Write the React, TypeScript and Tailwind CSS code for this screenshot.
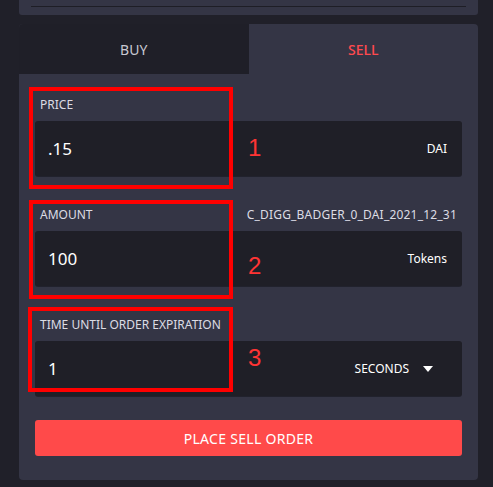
const FIELDS = [
  { label: 'PRICE', value: '.15', unit: 'DAI' },
  { label: 'AMOUNT', value: '100', unit: 'Tokens', extra: 'C_DIGG_BADGER_0_DAI_2021_12_31' },
  { label: 'TIME UNTIL ORDER EXPIRATION', value: '1', unit: 'SECONDS', select: true },
]

function Field({ label, value, unit, extra, select }: { label: string; value: string; unit: string; extra?: string; select?: boolean }) {
  return (
    <div className="flex flex-col gap-2">
      <div className="flex h-4 items-center justify-between pl-[5px] pr-[5px] text-[12px] text-[#dcdce4]">
        <span>{label}</span>
        {extra && <span className="tracking-[0.2px]">{extra}</span>}
      </div>
      <div className="flex h-[55px] items-center justify-between rounded-[3px] bg-[#1f1f27] pl-[13px] pr-[15px] shadow-[0_1px_0_rgba(0,0,0,0.35)]">
        <span className="text-[17px] text-white">{value}</span>
        {select ? (
          <span className="flex items-center gap-[14px] pr-[14px] text-[12px] text-white">
            {unit}
            <svg width="10" height="6" viewBox="0 0 10 6">
              <path d="M0 0h10L5 6z" fill="#fff" />
            </svg>
          </span>
        ) : (
          <span className="text-[12px] text-white">{unit}</span>
        )}
      </div>
    </div>
  )
}

export default function App() {
  return (
    <div className="h-screen w-[493px] overflow-hidden bg-[#202029] font-['Noto_Sans',sans-serif]">
      <div className="ml-[19px] h-[15px] w-[459px] rounded-b-[3px] bg-[#343545] px-3 pt-[6px]">
        <div className="border-t border-[#1e1e26]" />
      </div>

      <div className="ml-[19px] mt-[9px] w-[459px] overflow-hidden rounded-[4px] bg-[#343545]">
        <div className="grid h-[50px] grid-cols-2 text-[14px]">
          <div className="flex items-center justify-center bg-[#1f1f28] text-[#c8c8d2]">BUY</div>
          <div className="flex items-center justify-center font-medium text-[#ff4a4f]">SELL</div>
        </div>

        <div className="relative flex flex-col px-4 pb-6 pt-[23px]">
          <div className="flex flex-col gap-[31px]">
            {FIELDS.map((f) => (
              <Field key={f.label} {...f} />
            ))}
          </div>

          <button className="mt-6 h-9 rounded-[3px] bg-[#ff4a4a] text-[14px] tracking-[0.3px] text-white">PLACE SELL ORDER</button>

          {/* annotations */}
          <div className="absolute left-[10px] top-[13px] h-[102px] w-[204px] border-4 border-[#ff0000]" />
          <div className="absolute left-[10px] top-[126px] h-[99px] w-[204px] border-4 border-[#ff0000]" />
          <div className="absolute left-[9px] top-[233px] h-[85px] w-[205px] border-4 border-[#ff0000]" />
          <span className="absolute left-[229px] top-[62px] font-['Liberation_Sans',sans-serif] text-[24px] leading-6 text-[#ff3434]">1</span>
          <span className="absolute left-[229px] top-[180px] font-['Liberation_Sans',sans-serif] text-[24px] leading-6 text-[#ff3434]">2</span>
          <span className="absolute left-[229px] top-[272px] font-['Liberation_Sans',sans-serif] text-[24px] leading-6 text-[#ff3434]">3</span>
        </div>
      </div>
    </div>
  )
}
